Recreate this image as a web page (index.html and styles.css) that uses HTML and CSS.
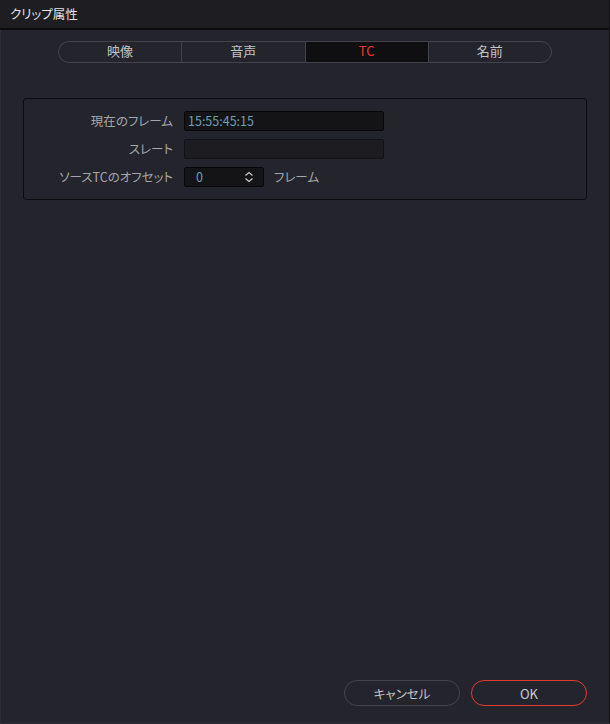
FILE: index.html
```html
<!DOCTYPE html>
<html lang="ja">
<head>
<meta charset="utf-8">
<link rel="stylesheet" href="styles.css">
</head>
<body>
<div class="window">
  <div class="titlebar">クリップ属性</div>
  <div class="content">
    <div class="tabs">
      <div class="tab">映像</div>
      <div class="tab">音声</div>
      <div class="tab active">TC</div>
      <div class="tab">名前</div>
    </div>
    <div class="panel">
      <div class="row">
        <div class="label">現在のフレーム</div>
        <div class="field wide value">15:55:45:15</div>
      </div>
      <div class="row">
        <div class="label">スレート</div>
        <div class="field wide empty"></div>
      </div>
      <div class="row">
        <div class="label">ソースTCのオフセット</div>
        <div class="field spin value">
          <span>0</span>
          <svg class="spin-icon" width="10" height="12" viewBox="0 0 10 12"><path d="M1.5 4.5 L5 1.5 L8.5 4.5 M1.5 7.5 L5 10.5 L8.5 7.5" fill="none" stroke="#c8c8c8" stroke-width="1.3"/></svg>
        </div>
        <div class="unit">フレーム</div>
      </div>
    </div>
    <div class="spacer"></div>
    <div class="buttons">
      <button class="btn">キャンセル</button>
      <button class="btn ok">OK</button>
    </div>
  </div>
</div>
</body>
</html>
```

FILE: styles.css
```css
* { box-sizing: border-box; }
html, body { margin: 0; padding: 0; }
body {
  width: 610px;
  height: 724px;
  background: #25252d;
  font-family: "Noto Sans CJK JP", "Noto Sans", sans-serif;
  overflow: hidden;
}
.window {
  width: 610px;
  height: 724px;
  display: flex;
  flex-direction: column;
  border-right: 1px solid #121216;
  border-bottom: 1px solid #2e2e36;
}
.titlebar {
  height: 30px;
  flex: none;
  background: #1d1d22;
  border-bottom: 2px solid #0c0c0e;
  color: #e2e2e2;
  font-size: 12.5px;
  line-height: 28px;
  padding-left: 10px;
  font-feature-settings: "palt";
}
.content {
  flex: 1;
  display: flex;
  flex-direction: column;
  background: #24252c;
  border-left: 1px solid #2e2e36;
}
.tabs {
  margin: 11px 0 0 57px;
  width: 494px;
  height: 22px;
  display: flex;
  border: 1px solid #42434b;
  border-radius: 11px;
  overflow: hidden;
}
.tab {
  flex: 1;
  text-align: center;
  color: #c4c4c4;
  font-size: 13px;
  line-height: 17px;
  border-left: 1px solid #42434b;
}
.tab:first-child { border-left: none; }
.tab.active {
  background: #0f0f11;
  color: #ec3a2e;
}
.panel {
  margin: 35px 0 0 22px;
  width: 564px;
  height: 102px;
  border: 1px solid #0b0b0d;
  border-radius: 3px;
  padding-top: 12px;
  display: flex;
  flex-direction: column;
  gap: 9px;
}
.row {
  display: flex;
  align-items: center;
  height: 19px;
}
.label {
  width: 149px;
  text-align: right;
  color: #a6a6aa;
  font-size: 12.5px;
  margin-right: 11px;
  font-feature-settings: "palt";
}
.field {
  height: 20px;
  background: #141417;
  border: 1px solid #07070a;
  border-radius: 2px;
  font-size: 12.5px;
  line-height: 18px;
}
.field.wide { width: 200px; }
.field.empty { background: #1c1c21; border-color: #121216; }
.value { color: #6f9fb8; padding-left: 3px; }
.field.spin {
  width: 80px;
  display: flex;
  align-items: center;
  justify-content: space-between;
  padding: 0 9px 0 11px;
}
.spin-icon { display: block; }
.unit {
  margin-left: 10px;
  color: #a6a6aa;
  font-size: 12.5px;
  font-feature-settings: "palt";
}
.spacer { flex: 1; }
.buttons {
  display: flex;
  justify-content: flex-end;
  gap: 11px;
  padding: 0 22px 17px 0;
}
.btn {
  width: 116px;
  height: 26px;
  border-radius: 13px;
  background: transparent;
  border: 1px solid #42434b;
  color: #c4c4c4;
  font-family: "Noto Sans CJK JP", "Noto Sans", sans-serif;
  font-size: 12.5px;
  padding: 0;
  font-feature-settings: "palt";
}
.btn.ok {
  border: 1.5px solid #e23a2e;
  color: #c8ced4;
  font-size: 13px;
}
```
